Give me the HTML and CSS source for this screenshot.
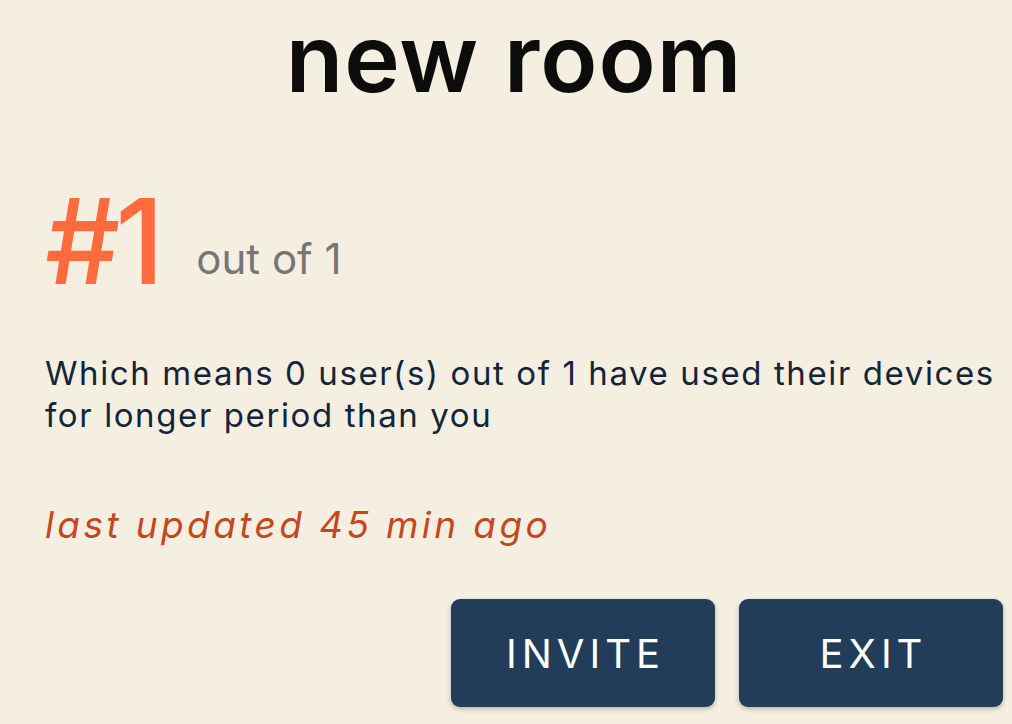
FILE: index.html
```html
<!DOCTYPE html>
<html>
<head>
<meta charset="utf-8">
<link rel="stylesheet" href="styles.css">
</head>
<body>
<main class="screen">
  <h1 class="title">new room</h1>
  <div class="rank">
    <span class="rank-num">#1</span>
    <span class="rank-total">out of 1</span>
  </div>
  <p class="desc">Which means 0 user(s) out of 1 have used their devices for longer period than you</p>
  <p class="updated">last updated 45 min ago</p>
  <div class="actions">
    <button class="btn">INVITE</button>
    <button class="btn">EXIT</button>
  </div>
</main>
</body>
</html>
```
FILE: styles.css
```css
html, body {
  margin: 0;
  padding: 0;
  background: #f5efe2;
}
body {
  width: 1012px;
  height: 724px;
  overflow: hidden;
  font-family: Inter, "Noto Sans", sans-serif;
}
.screen {
  padding: 0 9px 0 45px;
}
.title {
  margin: 0;
  padding: 1px 20px 0 0;
  text-align: center;
  font-size: 94px;
  line-height: 114px;
  font-weight: 600;
  letter-spacing: 1px;
  color: #0c0c0c;
}
.rank {
  display: flex;
  align-items: baseline;
  margin-top: 61px;
  gap: 37px;
}
.rank-num {
  font-size: 118px;
  line-height: 130px;
  font-weight: 500;
  color: #ff6b3d;
  letter-spacing: -5px;
}
.rank-total {
  font-size: 42px;
  color: #777674;
  position: relative;
  top: -10px;
}
.desc {
  margin: 46px 0 0;
  font-size: 33px;
  line-height: 42px;
  letter-spacing: 1.6px;
  color: #14253a;
}
.updated {
  margin: 66px 0 0;
  font-size: 37px;
  line-height: 45px;
  letter-spacing: 3.4px;
  font-style: italic;
  color: #c4481e;
}
.actions {
  display: flex;
  justify-content: flex-end;
  gap: 24px;
  margin-top: 52px;
}
.btn {
  width: 264px;
  height: 108px;
  border: none;
  border-radius: 9px;
  background: #213d5a;
  color: #fff;
  font-family: inherit;
  font-size: 40px;
  letter-spacing: 5px;
  padding: 0 0 0 5px;
  box-shadow: 0 2px 5px rgba(0,0,0,0.25);
}
```
